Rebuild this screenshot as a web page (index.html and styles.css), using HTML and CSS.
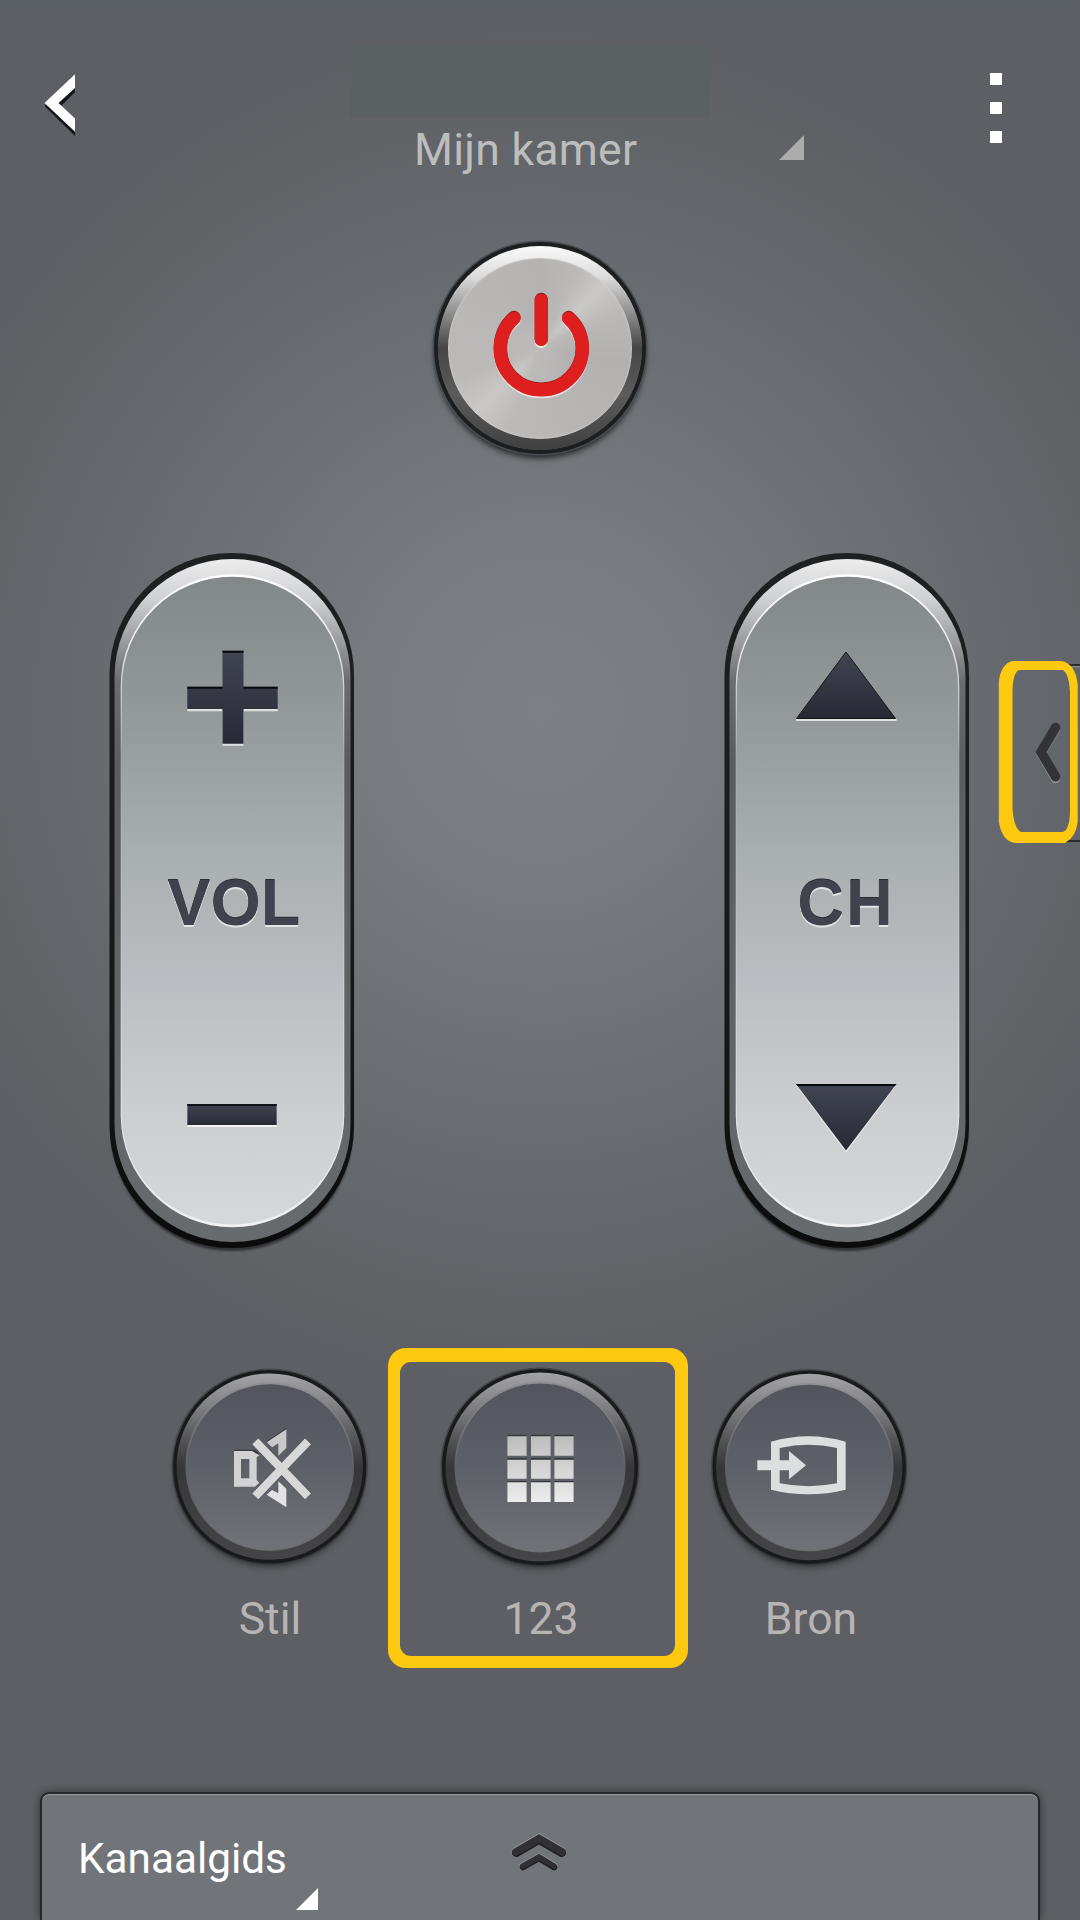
FILE: index.html
```html
<!DOCTYPE html>
<html lang="nl">
<head>
<meta charset="utf-8">
<title>Afstandsbediening</title>
<link rel="stylesheet" href="styles.css">
</head>
<body>
<svg class="defs" width="0" height="0" aria-hidden="true">
  <defs>
    <linearGradient id="pillRing" x1="0" y1="0" x2="0" y2="1">
      <stop offset="0" stop-color="#1f2021"/><stop offset=".7" stop-color="#161718"/><stop offset="1" stop-color="#0b0b0b"/>
    </linearGradient>
    <linearGradient id="pillRim" gradientUnits="userSpaceOnUse" x1="0" y1="19" x2="0" y2="702">
      <stop offset="0" stop-color="#ececed"/><stop offset=".06" stop-color="#cfd0d2"/><stop offset=".13" stop-color="#929497"/><stop offset=".18" stop-color="#696c70"/><stop offset=".3" stop-color="#5a5d60"/><stop offset="1" stop-color="#686b6d"/>
    </linearGradient>
    <linearGradient id="pillFace" gradientUnits="userSpaceOnUse" x1="0" y1="34" x2="0" y2="687">
      <stop offset="0" stop-color="#828888"/><stop offset=".2" stop-color="#929799"/><stop offset=".45" stop-color="#abb0b3"/><stop offset=".62" stop-color="#babdc1"/><stop offset=".8" stop-color="#cbccd0"/><stop offset="1" stop-color="#d7d8d9"/>
    </linearGradient>
    <linearGradient id="pillEdge" gradientUnits="userSpaceOnUse" x1="0" y1="34" x2="0" y2="687">
      <stop offset="0" stop-color="#fff"/><stop offset=".12" stop-color="#e6e8e9"/><stop offset=".28" stop-color="#a0a5a8"/><stop offset=".6" stop-color="#c5c7ca"/><stop offset="1" stop-color="#f2f2f2"/>
    </linearGradient>
    <linearGradient id="ink" x1="0" y1="0" x2="0" y2="1">
      <stop offset="0" stop-color="#414551"/><stop offset="1" stop-color="#272a35"/>
    </linearGradient>
    <linearGradient id="darkRim" x1="0" y1="0" x2="0" y2="1">
      <stop offset="0" stop-color="#a2a2a7"/><stop offset=".15" stop-color="#86868b"/><stop offset=".35" stop-color="#55555a"/><stop offset=".5" stop-color="#37373b"/><stop offset="1" stop-color="#454548"/>
    </linearGradient>
    <linearGradient id="darkFace" x1="0" y1="0" x2="0" y2="1">
      <stop offset="0" stop-color="#53545c"/><stop offset=".5" stop-color="#5e6067"/><stop offset="1" stop-color="#717278"/>
    </linearGradient>
    <linearGradient id="darkEdge" x1="0" y1="0" x2="0" y2="1">
      <stop offset="0" stop-color="#909095"/><stop offset=".5" stop-color="#5f6065"/><stop offset="1" stop-color="#6a6a6e"/>
    </linearGradient>
    <linearGradient id="glyph" x1="0" y1="0" x2="0" y2="1">
      <stop offset="0" stop-color="#bdbdbd"/><stop offset="1" stop-color="#ececec"/>
    </linearGradient>
    <filter id="soft" x="-20%" y="-20%" width="140%" height="140%"><feGaussianBlur stdDeviation="5"/></filter>
    <filter id="soft1" x="-20%" y="-20%" width="140%" height="140%"><feGaussianBlur stdDeviation="1"/></filter>
    <g id="pill">
      <rect x="11" y="17" width="242" height="694" rx="121" fill="#000" opacity=".5" filter="url(#soft1)"/>
      <rect x="9.500" y="13" width="244.500" height="695" rx="122" fill="url(#pillRing)"/>
      <rect x="14.500" y="19" width="236" height="683" rx="118" fill="url(#pillRim)"/>
      <rect x="20.700" y="34.300" width="223.600" height="653" rx="111.800" fill="url(#pillEdge)"/>
      <path d="M22 146A110.500 109.300 0 0 1 243 146V576A110.500 108.500 0 0 1 22 576Z" fill="url(#pillFace)"/>
    </g>
    <g id="round">
      <circle cx="120" cy="133" r="93" fill="#000" opacity=".75" filter="url(#soft)"/>
      <circle cx="120" cy="127" r="99.500" fill="#303135" opacity=".55"/>
      <circle cx="120" cy="127" r="98" fill="#191a1c"/>
      <circle cx="120" cy="127" r="94.500" fill="url(#darkRim)"/>
      <circle cx="120" cy="127" r="85.500" fill="url(#darkEdge)"/>
      <circle cx="120" cy="127.500" r="84" fill="url(#darkFace)"/>
    </g>
  </defs>
</svg>

<main class="remote">
  <header class="topbar">
    <svg class="back" width="34" height="62" viewBox="0 0 34 62">
      <path d="M31 3L.500 32 31 62V48L17 32 31 18Z" fill="#15171d"/>
      <path d="M31 .300V14L14.500 29 31 44.500V57.700L.500 29Z" fill="#fff"/>
    </svg>
    <div class="device">
      <div class="device-name"></div>
      <div class="room">Mijn kamer</div>
    </div>
    <svg class="caret" width="25" height="25" viewBox="0 0 25 25"><path d="M25 0V25H0Z" fill="#acacac"/></svg>
    <div class="menu"><i></i><i></i><i></i></div>
  </header>

  <div class="power">
    <div class="power-face"></div>
    <svg class="power-art" width="240" height="240" viewBox="0 0 240 240">
      <g fill="none" stroke-linecap="round" stroke-width="13.300">
        <path d="M94 91A41 41 0 1 0 148.600 91M121.300 73V112.500" stroke="#e8e2e2" transform="translate(0 1)"/>
        <path d="M94 89.500A41 41 0 1 0 148.600 89.500M121.300 71.500V111" stroke="#8d1717"/>
        <path d="M94 90.300A41 41 0 1 0 148.600 90.300M121.300 72.300V111.400" stroke="#dd1f20"/>
      </g>
    </svg>
  </div>

  <section class="rockers">
    <svg width="270" height="720" viewBox="0 0 270 720">
      <use href="#pill"/>
      <path d="M87.300 169h35.200v35h21v-35h34.200v2.300H87.300Z" fill="#dfe1e3"/>
      <path d="M122.500 203.500h21v2.300h-21Z" fill="#dfe1e3"/>
      <path d="M122.500 110.700h21v36h34.200V169h-34.200v34.700h-21V169H87.300V146.700h35.200Z" fill="url(#ink)"/>
      <path d="M122.500 110.700h21v2h-21ZM87.300 146.700h35.200v2H87.300ZM143.500 146.700h34.200v2h-34.200Z" fill="#08090c"/>
      <g class="rocker-label"><text x="67.500" y="387" fill="#e2e4e6">VOL</text><text x="67.500" y="384" fill="#2b2d36">VOL</text><text x="67.500" y="385" fill="#40434e">VOL</text></g>
      <path d="M87.300 566h89.400v21H87.300Z" fill="#f3f3f4"/>
      <path d="M87.300 564h89.400v21H87.300Z" fill="url(#ink)"/>
      <path d="M87.300 564h89.400v2H87.300Z" fill="#101216"/>
    </svg>
    <svg width="270" height="720" viewBox="0 0 270 720">
      <use href="#pill"/>
      <path d="M81 178.500H181.500V181H81Z" fill="#dfe1e3"/>
      <path d="M131 112L180.500 178.500H81.500Z" fill="url(#ink)" stroke="#14161c"/>
      <g class="rocker-label channel"><text x="82.500" y="387" fill="#e2e4e6">CH</text><text x="82.500" y="384" fill="#2b2d36">CH</text><text x="82.500" y="385" fill="#40434e">CH</text></g>
      <path d="M81 545L131 612.500 181.500 545Z" fill="#f0f1f2"/>
      <path d="M81 544H181.500L131 610.500Z" fill="url(#ink)"/>
      <path d="M81 544H181.500L180 546H82.500Z" fill="#08090c"/>
    </svg>
    <svg width="95" height="200" viewBox="0 0 95 200">
      <path d="M60 14H95V16H60ZM60 190H95V192H60Z" fill="#2c2d31"/>
      <path d="M60 16.300H95V17.300H60Z" fill="#96989c"/>
      <path fill-rule="evenodd" fill="#fec90f" d="M28 11H76Q90 13 92.700 34V172Q91 187 80 193H30Q17 191 13.800 172V32Q16 13 28 11ZM34 20Q27.500 23 27.500 43V158Q28.500 178 36 182H78Q85 179 85 160V41Q84 24 78 20Z"/>
      <path d="M70.600 77.500L56 102.300 70.600 127.500" transform="translate(0 1)" fill="none" stroke="#8d8f93" stroke-width="9.500" stroke-linecap="round"/>
      <path d="M70.600 77.500L56 102.300 70.600 126.700" fill="none" stroke="#323237" stroke-width="9.500" stroke-linecap="round"/>
    </svg>
  </section>

  <section class="actions">
    <div class="action">
      <svg width="240" height="240" viewBox="0 0 240 240">
        <use href="#round" transform="translate(1.400 1.400) scale(.986)"/>
        <g transform="translate(10 0) scale(.33333)">
          <g fill="#3b3c42" transform="translate(0 -4)">
            <path d="M222 333H285L298 346H222ZM320 307L379 268V276L322 312Z"/>
          </g>
          <path fill="#d2d2d2" fill-rule="evenodd" d="M222 333H276L298 346L290 352V420L298 428L285 440H222ZM243 357V415H268V357Z"/>
          <path fill="#c9c9c9" d="M320 307L379 268V324L355 347V310L336 322Z"/>
          <path fill="#e2e2e2" d="M320 464L379 502V446L355 424V460L336 450Z"/>
          <path d="M286 304L444 469M444 304L286 469" stroke="#5a5c62" stroke-width="31" fill="none"/>
          <path d="M286 304L444 469M444 304L286 469" stroke="#d8d8d8" stroke-width="25" fill="none"/>
        </g>
      </svg>
      <span>Stil</span>
    </div>
    <div class="action">
      <svg width="240" height="240" viewBox="0 0 240 240">
        <use href="#round"/>
        <g transform="translate(-40 0) scale(.33333)">
          <path fill="#35363b" d="M382 284H440V345H382ZM453 284H512V345H453ZM523 284H581V345H523ZM382 354H440V415H382ZM453 354H512V415H453ZM523 354H581V415H523ZM382 423H440V483H382ZM453 423H512V483H453ZM523 423H581V483H523Z"/>
          <path fill="url(#glyph)" d="M382 289H440V347H382ZM453 289H512V347H453ZM523 289H581V347H523ZM382 359H440V416H382ZM453 359H512V416H453ZM523 359H581V416H523ZM382 427H440V486H382ZM453 427H512V486H453ZM523 427H581V486H523Z"/>
        </g>
      </svg>
      <span class="digits">123</span>
      <div class="highlight"></div>
    </div>
    <div class="action">
      <svg width="240" height="240" viewBox="0 0 240 240">
        <use href="#round" transform="translate(.900 1.800) scale(.986)"/>
        <g transform="translate(10 0) scale(.33333)" fill="#dddee0">
          <path fill-rule="evenodd" d="M213 305Q325 272 437 305V449Q325 477 213 449ZM239 324Q325 305 411 324V430Q325 447 239 430Z"/>
          <path d="M172 361H267V333L318 376 267 418V391H172Z"/>
        </g>
      </svg>
      <span class="source">Bron</span>
    </div>
  </section>

  <footer class="guide">
    <div class="guide-title">
      <span>Kanaalgids</span>
      <svg width="22" height="22" viewBox="0 0 22 22"><path d="M22 0V22H0Z" fill="#fff"/></svg>
    </div>
    <svg class="expand" width="60" height="44" viewBox="0 0 60 44" fill="none" stroke-linecap="round" stroke-linejoin="miter">
      <path d="M7.200 21.700L30 8.500 52.800 21.700" stroke="#9b9da0" stroke-width="9" transform="translate(0 -1)"/>
      <path d="M14 36L30 27 45 36" stroke="#9b9da0" stroke-width="7" transform="translate(0 -1)"/>
      <path d="M7.200 21.700L30 8.500 52.800 21.700" stroke="#1c1c20" stroke-width="8.500"/>
      <path d="M14 36L30 27 45 36" stroke="#1c1c20" stroke-width="6.500"/>
      <path d="M7.200 20.700L30 7.500 52.800 20.700" stroke="#303035" stroke-width="7.500"/>
      <path d="M14 35L30 26 45 35" stroke="#303035" stroke-width="5.500"/>
    </svg>
  </footer>
</main>
</body>
</html>
```
FILE: styles.css
```css
* { box-sizing: border-box; }

body {
  margin: 0;
  font-family: Roboto, sans-serif;
  background: #5e5f64;
}

svg { display: block; }

.defs { position: absolute; }

.remote {
  display: flex;
  flex-direction: column;
  width: 1080px;
  height: 1920px;
  overflow: hidden;
  background:
    linear-gradient(to bottom, #58616480 0, #58616400 60px),
    radial-gradient(ellipse 660px 680px at 540px 710px, #7d8084 0, #787b7f 25%, #6d7074 52%, #63666a 78%, #5e5f64 100%);
}

.remote > * { flex-shrink: 0; }

.topbar {
  display: grid;
  grid-template-columns: 306px 360px 1fr 12px;
  height: 230px;
  padding: 45px 78px 0 44px;
}

.back { margin-top: 29px; }

.device-name {
  height: 72px;
  background: #5b6062;
}

.room {
  padding: 7px 0 0 64px;
  color: #bdbdbd;
  font-size: 44.500px;
  letter-spacing: .300px;
  line-height: 52px;
  white-space: nowrap;
}

.caret { margin: 90px 0 0 69px; }

.menu {
  display: flex;
  flex-direction: column;
  gap: 17px;
  padding-top: 28px;
}

.menu i {
  width: 12px;
  height: 12px;
  background: #fff;
}

.power {
  display: grid;
  place-items: center;
  width: 204px;
  height: 204px;
  margin: 16px auto 0;
  border-radius: 50%;
  background: linear-gradient(#fafafa 0, #dcdcdc 15%, #858585 35%, #454545 50%, #5c5c5c 72%, #3f3f3f 100%);
  box-shadow: 0 0 0 4px #1c1e20, 0 0 0 5.500px #4a4d51, 0 5px 6px 3px #000b;
}

.power-face {
  grid-area: 1 / 1;
  width: 184px;
  height: 181px;
  border-radius: 50%;
  background:
    radial-gradient(circle, #bcbbba 0, #bcbbba00 30px),
    conic-gradient(#b4b3b2 0deg, #bab9b8 25deg, #cac9c8 45deg, #bab9b8 65deg, #b2b1b0 100deg, #b7b6b5 150deg, #bbbab9 200deg, #c9c8c7 225deg, #bbbab9 250deg, #b9b8b7 300deg, #b4b3b2 360deg);
  box-shadow: inset 0 0 2px #eee;
}

.power-art {
  grid-area: 1 / 1;
  margin: -18px;
}

.rockers {
  display: flex;
  height: 720px;
  margin: 90px 0 0 100px;
}

.rockers svg:nth-child(2) { margin-left: 345px; }

.rockers svg:nth-child(3) { margin-top: 110px; }

.rocker-label {
  font: bold 64px "Liberation Sans", sans-serif;
  letter-spacing: .500px;
}

.channel { letter-spacing: 2.500px; }

.actions {
  display: flex;
  gap: 30px;
  margin: 80px 0 0 150px;
}

.action {
  position: relative;
  width: 240px;
  height: 320px;
  color: #b7b4b4;
  font-size: 44.500px;
  line-height: 52px;
  text-align: center;
}

.action span {
  display: block;
  margin-top: 13px;
}

.action .digits,
.action .source { padding-left: 2px; }

.highlight {
  position: absolute;
  left: -32px;
  top: 8px;
  width: 300px;
  height: 320px;
  border: solid #fec90f;
  border-width: 14px 13px 12px 12px;
  border-radius: 18px;
}

.highlight::before {
  content: "";
  display: block;
  height: 100%;
  border-radius: 11px;
  box-shadow: 0 0 0 5px #fec90f;
  clip-path: inset(-1px);
}

.guide {
  display: flex;
  width: 1000px;
  height: 128px;
  margin: 132px 0 0 40px;
  border: 2px solid #26272b;
  border-bottom: 0;
  border-radius: 9px 9px 0 0;
  background: #717478;
  box-shadow: inset 0 1px #9a9c9f, 0 0 8px #0007;
}

.guide-title {
  width: 276px;
  padding: 40px 0 0 36px;
  color: #fff;
  font-size: 42.300px;
  line-height: 50px;
}

.guide-title svg { margin: 4px 0 0 218px; }

.expand { margin: 37px 0 0 191px; }
```
